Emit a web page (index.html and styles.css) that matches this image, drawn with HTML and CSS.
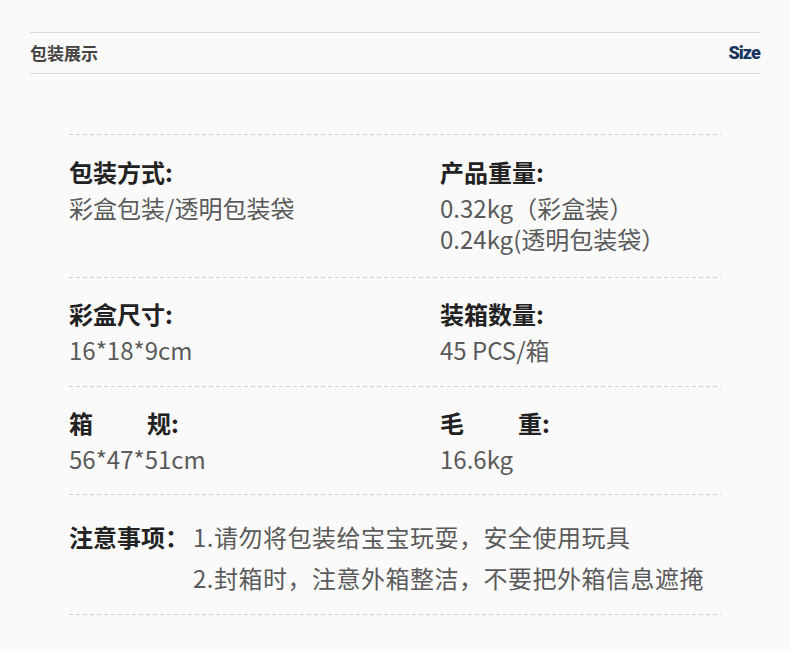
FILE: index.html
```
<!DOCTYPE html>
<html lang="zh">
<head>
<meta charset="utf-8">
<link rel="stylesheet" href="styles.css">
</head>
<body>
<div class="page">
  <div class="header">
    <span class="title">包装展示</span>
    <span class="size">Size</span>
  </div>
  <div class="table">
    <div class="row grid first">
      <div class="cell">
        <div class="label">包装方式:</div>
        <div class="value">彩盒包装/透明包装袋</div>
      </div>
      <div class="cell">
        <div class="label">产品重量:</div>
        <div class="value">0.32kg（彩盒装）</div>
        <div class="value">0.24kg(透明包装袋）</div>
      </div>
    </div>
    <div class="row grid">
      <div class="cell">
        <div class="label">彩盒尺寸:</div>
        <div class="value">16*18*9cm</div>
      </div>
      <div class="cell">
        <div class="label">装箱数量:</div>
        <div class="value">45 PCS/箱</div>
      </div>
    </div>
    <div class="row grid third">
      <div class="cell">
        <div class="label"><span class="spread">箱</span>规:</div>
        <div class="value">56*47*51cm</div>
      </div>
      <div class="cell">
        <div class="label"><span class="spread">毛</span>重:</div>
        <div class="value">16.6kg</div>
      </div>
    </div>
    <div class="row notes last">
      <div class="note-label">注意事项：</div>
      <div class="note-lines">
        <div class="note">1.请勿将包装给宝宝玩耍，安全使用玩具</div>
        <div class="note">2.封箱时，注意外箱整洁，不要把外箱信息遮掩</div>
      </div>
    </div>
  </div>
</div>
</body>
</html>
```
FILE: styles.css
```
html, body {
  margin: 0;
  padding: 0;
  background: #fafafa;
}
body {
  font-family: "Noto Sans CJK SC", "Noto Sans", sans-serif;
  width: 790px;
  height: 652px;
  overflow: hidden;
}
.page {
  padding-top: 32px;
}
.header {
  margin: 0 30px;
  height: 40px;
  border-top: 1px solid #dcdcdc;
  border-bottom: 1px solid #dcdcdc;
  display: flex;
  align-items: center;
  justify-content: space-between;
}
.title {
  font-size: 17px;
  font-weight: 700;
  color: #444;
  line-height: 20px;
}
.size {
  font-family: Roboto, "Liberation Sans", sans-serif;
  font-size: 18px;
  font-weight: 900;
  color: #19355e;
  letter-spacing: -0.9px;
  line-height: 20px;
}
.table {
  margin: 60px 0 0 69px;
  width: 652px;
}
.row {
  padding: 22px 0 21px;
  background-image: linear-gradient(to right, #cdd0d3 4px, transparent 4px);
  background-size: 7px 1px;
  background-repeat: repeat-x;
  background-position: left top;
}
.row.first {
  padding: 23px 0 23px;
}
.row.third {
  padding: 22px 0 20px;
}
.row.last {
  padding: 22px 0 17px;
  background-image: linear-gradient(to right, #cdd0d3 4px, transparent 4px), linear-gradient(to right, #cdd0d3 4px, transparent 4px);
  background-size: 7px 1px, 7px 1px;
  background-repeat: repeat-x, repeat-x;
  background-position: left top, left bottom;
}
.grid {
  display: grid;
  grid-template-columns: 371px 1fr;
}
.label {
  font-size: 24px;
  font-weight: 700;
  color: #222;
  line-height: 30px;
  margin-bottom: 5px;
}
.spread {
  margin-right: 54px;
}
.value {
  font-size: 24px;
  color: #5a5a5a;
  line-height: 31px;
}
.notes {
  display: flex;
}
.note-label {
  font-size: 24px;
  font-weight: 700;
  color: #222;
  line-height: 41px;
  width: 124px;
}
.note {
  font-size: 24px;
  color: #5a5a5a;
  line-height: 41px;
  letter-spacing: 0.5px;
}
```
